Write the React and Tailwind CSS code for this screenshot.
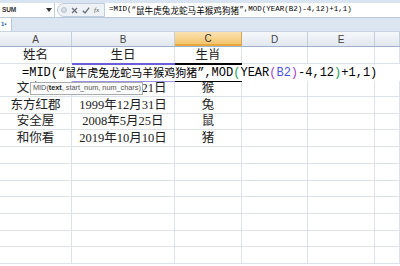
import React from "react";

const cols = [72, 103, 67, 66, 67, 25];
const letters = ["A", "B", "C", "D", "E", ""];

const data = [
    ["姓名", "生日", "生肖"],
    ["", "", ""],
    ["文小明", "1992年11月21日", "猴"],
    ["东方红郡", "1999年12月31日", "兔"],
    ["安全屋", "2008年5月25日", "鼠"],
    ["和你看", "2019年10月10日", "猪"],
];

const ROWS = 13;

function Cjk({ children, size }) {
    return (
        <span style={{ fontSize: size }} className="font-['Noto_Sans_CJK_SC',sans-serif]">
            {children}
        </span>
    );
}

function Formula({ cjk, colored }) {
    const g = colored ? "text-[#1f9a4a]" : "";
    const p = colored ? "text-[#a23cc8]" : "";
    const b = colored ? "text-[#4b55d8]" : "";
    return (
        <>
            =MID(“<Cjk size={cjk}>鼠牛虎兔龙蛇马羊猴鸡狗猪</Cjk>”,MOD<span className={g}>(</span>YEAR
            <span className={p}>(</span>
            <span className={b}>B2</span>
            <span className={p}>)</span>-4,12<span className={g}>)</span>+1,1)
        </>
    );
}

export default function App() {
    return (
        <div className="relative w-[400px] h-[266px] overflow-hidden bg-white font-['Liberation_Sans',sans-serif]">
            <div className="h-[3px] bg-[#d9e4f2]"></div>

            {/* formula bar */}
            <div className="h-[15px] flex items-stretch bg-white border-b border-[#b8c8dc]">
                <div className="w-[55px] flex items-center justify-between pl-[2px] pr-[2px] border-r border-[#c4d0e0]">
                    <span className="text-[6.5px] font-bold text-[#333] tracking-tight">SUM</span>
                    <svg width="6" height="4" viewBox="0 0 6 4">
                        <path d="M0 0h6L3 4z" fill="#333" />
                    </svg>
                </div>
                <div className="ml-[2px] w-[48px] flex items-center gap-[4px] pl-[3px] bg-[#eef2f7] border border-[#c2cddb] rounded-l-full">
                    <span className="w-[6px] h-[6px] rounded-full bg-[#d8dde5] border border-[#b9c1cc]"></span>
                    <svg width="7" height="7" viewBox="0 0 7 7">
                        <path d="M1 1l5 5M6 1l-5 5" stroke="#6a6f78" strokeWidth="1.3" />
                    </svg>
                    <svg width="8" height="7" viewBox="0 0 8 7">
                        <path d="M0.8 3.8l2.2 2.2 4.2-5.4" stroke="#6a6f78" strokeWidth="1.3" fill="none" />
                    </svg>
                    <span className="text-[7px] italic font-['Liberation_Serif',serif] text-[#555]">fx</span>
                </div>
                <div className="flex-1 flex items-center pl-[4px] text-[7.5px] text-black font-['Liberation_Mono',monospace] whitespace-nowrap">
                    <Formula cjk="8.6px" />
                </div>
            </div>

            {/* strip */}
            <div className="h-[14px] flex bg-[#dce6f3] border-b border-[#c8d4e4]">
                <div className="w-[12px] bg-white border-r border-[#b8c8dc] flex items-center pl-[1px] text-[6px] text-[#2a5aa8] font-bold">
                    1▪
                </div>
            </div>

            {/* column headers */}
            <div className="h-[15px] flex border-b border-[#9fb3cb]">
                {cols.map((w, i) => (
                    <div
                        key={i}
                        style={{ width: w }}
                        className={
                            i === 2
                                ? "shrink-0 flex items-center justify-center text-[10px] text-[#333] bg-gradient-to-b from-[#fbe3b2] to-[#f3c56c] border-r border-[#d8a650] border-b-2 border-b-[#e5a83a]"
                                : "shrink-0 flex items-center justify-center text-[10px] text-[#444] bg-gradient-to-b from-[#f5f7fa] to-[#e2e8f0] border-r border-[#c5cfdb]"
                        }
                    >
                        {letters[i]}
                    </div>
                ))}
            </div>

            {/* grid */}
            <div className="font-['Liberation_Serif','Noto_Sans_CJK_SC',serif] text-[12.5px] text-[#222]">
                {Array.from({ length: ROWS }).map((_, r) => (
                    <div key={r} className="h-[16.7px] flex">
                        {cols.map((w, c) => (
                            <div
                                key={c}
                                style={{ width: w }}
                                className="shrink-0 flex items-center justify-center border-r border-b border-[#dde1e8] leading-none whitespace-nowrap"
                            >
                                {data[r] && data[r][c] ? data[r][c] : ""}
                            </div>
                        ))}
                    </div>
                ))}
            </div>

            {/* in-cell editing of C2 */}
            <div className="absolute left-0 top-[64px] w-[400px] h-[17px] bg-white flex items-center pl-[22px] text-[12px] text-black font-['Liberation_Mono',monospace] whitespace-nowrap">
                <Formula cjk="11px" colored />
            </div>
            <div className="absolute left-[72px] top-[63px] w-[103px] h-[1.5px] bg-[#6a5fd6]"></div>
            <div className="absolute left-[72px] top-[80.5px] w-[103px] h-[1px] bg-[#9c92e0]"></div>
            <div className="absolute left-[175px] top-[63px] w-[67px] h-[2px] bg-black"></div>
            <div className="absolute left-[175px] top-[80.5px] w-[67px] h-[1.5px] bg-black"></div>

            {/* tooltip */}
            <div className="absolute left-[30px] top-[82px] w-[113px] h-[13px] bg-[#fbfbfb] border border-[#a9adb3] flex items-center pl-[2px] text-[7.3px] text-[#555] font-['Liberation_Sans',sans-serif] whitespace-nowrap overflow-hidden">
                MID(<b className="text-[#222]">text</b>, start_num, num_chars)
            </div>
        </div>
    );
}
